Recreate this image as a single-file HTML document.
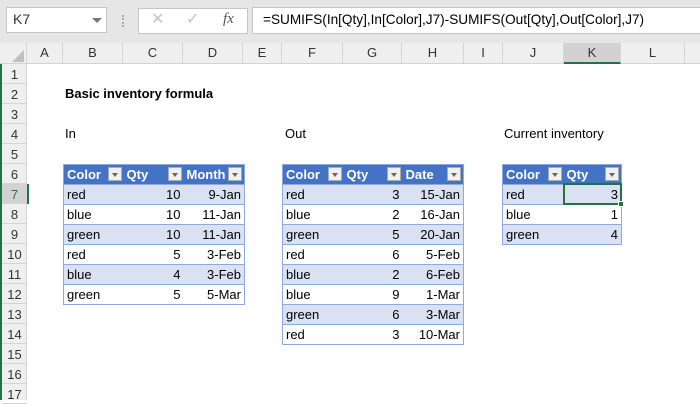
<!DOCTYPE html>
<html><head><style>
*{margin:0;padding:0;box-sizing:border-box}
body{width:700px;height:400px;overflow:hidden;background:#fff;font-family:"Liberation Sans",Arial,sans-serif;position:relative}
.a{position:absolute}
.top{left:0;top:0;width:700px;height:43px;background:#e6e6e6}
.box{background:#fff;border:1px solid #c6c6c6}
.colh{left:0;top:43px;width:700px;height:21px;background:#efefef;border-bottom:1px solid #d4d4d4}
.ch{position:absolute;top:43px;height:20px;font-size:13px;color:#333;text-align:center;line-height:20px;border-right:1px solid #d4d4d4}
.rowh{left:2px;top:64px;width:25px;height:336px;background:#efefef;border-right:1px solid #d4d4d4}
.rh{position:absolute;left:2px;width:25px;height:20px;font-size:13px;color:#333;text-align:center;line-height:21px;border-bottom:1px solid #d4d4d4}
.t{position:absolute;font-size:13px;color:#000;white-space:nowrap;line-height:20px}
table{position:absolute;border-collapse:collapse;font-size:13px;table-layout:fixed}
td{height:20px;padding:0 3px;line-height:19px;border-top:1px solid #8ea9db;white-space:nowrap;overflow:hidden}
tr.h td{background:#4472c4;color:#fff;font-weight:bold;position:relative;border-top:1px solid #8ea9db}
tr.b td{background:#d9e1f2}
td.r{text-align:right}
.dd{position:absolute;right:2px;top:2px;width:14px;height:14px;background:#f0f0f0;border:1px solid #aaa}
.dd:after{content:"";position:absolute;left:3px;top:5px;border-left:3.5px solid transparent;border-right:3.5px solid transparent;border-top:4px solid #666}
</style></head><body>
<div class="a" style="left:0;top:0;width:2px;height:400px;background:#217346"></div>
<div class="a top"></div>
<div class="a box" style="left:6px;top:7px;width:101px;height:26px"></div>
<div class="t" style="left:13px;top:9px;font-size:14px;color:#333">K7</div>
<div class="a" style="left:92px;top:18px;border-left:5px solid transparent;border-right:5px solid transparent;border-top:5px solid #777"></div>
<div class="a" style="left:122px;top:15px;width:2px;height:12px;border-left:2px dotted #aaa"></div>
<div class="a box" style="left:138px;top:8px;width:110px;height:26px"></div>
<div class="t" style="left:151px;top:10px;font-size:16px;color:#c4c4c4">✕</div>
<div class="t" style="left:186px;top:10px;font-size:16px;color:#c4c4c4">✓</div>
<div class="t" style="left:223px;top:9px;font-size:15px;color:#555;font-family:'Liberation Serif',serif;font-style:italic">fx</div>
<div class="a box" style="left:252px;top:7px;width:450px;height:27px"></div>
<div class="t" style="left:263px;top:10px;font-size:13.6px;color:#000">=SUMIFS(In[Qty],In[Color],J7)-SUMIFS(Out[Qty],Out[Color],J7)</div>

<div class="a colh"></div>
<div class="a" style="left:12px;top:50px;width:0;height:0;border-left:12px solid transparent;border-bottom:12px solid #c0c0c0"></div>
<div class="ch" style="left:0;width:27px"></div>
<div class="ch" style="left:27px;width:36px">A</div>
<div class="ch" style="left:63px;width:60px">B</div>
<div class="ch" style="left:123px;width:60px">C</div>
<div class="ch" style="left:183px;width:60px">D</div>
<div class="ch" style="left:243px;width:39px">E</div>
<div class="ch" style="left:282px;width:61px">F</div>
<div class="ch" style="left:343px;width:59px">G</div>
<div class="ch" style="left:402px;width:62px">H</div>
<div class="ch" style="left:464px;width:39px">I</div>
<div class="ch" style="left:503px;width:61px">J</div>
<div class="ch" style="left:564px;width:57px;background:#d2d2d2;border-bottom:2px solid #217346;height:21px">K</div>
<div class="ch" style="left:621px;width:64px">L</div>

<div class="a rowh"></div>
<div class="rh" style="top:64px">1</div><div class="rh" style="top:84px">2</div><div class="rh" style="top:104px">3</div><div class="rh" style="top:124px">4</div><div class="rh" style="top:144px">5</div><div class="rh" style="top:164px">6</div><div class="rh" style="top:184px;background:#d2d2d2;color:#217346">7</div><div class="rh" style="top:204px">8</div><div class="rh" style="top:224px">9</div><div class="rh" style="top:244px">10</div><div class="rh" style="top:264px">11</div><div class="rh" style="top:284px">12</div><div class="rh" style="top:304px">13</div><div class="rh" style="top:324px">14</div><div class="rh" style="top:344px">15</div><div class="rh" style="top:364px">16</div><div class="rh" style="top:384px">17</div>
<div class="a" style="left:27px;top:184px;width:2px;height:20px;background:#217346"></div>

<div class="t" style="left:65px;top:84px;font-weight:bold">Basic inventory formula</div>
<div class="t" style="left:65px;top:124px">In</div>
<div class="t" style="left:285px;top:124px">Out</div>
<div class="t" style="left:504px;top:124px">Current inventory</div>

<table style="left:63px;top:164px;width:181px;border-left:1px solid #8ea9db;border-right:1px solid #8ea9db;border-bottom:1px solid #8ea9db">
<colgroup><col style="width:60px"><col style="width:60px"><col style="width:61px"></colgroup>
<tr class="h"><td>Color<span class="dd"></span></td><td>Qty<span class="dd"></span></td><td>Month<span class="dd"></span></td></tr>
<tr class="b"><td>red</td><td class="r">10</td><td class="r">9-Jan</td></tr>
<tr><td>blue</td><td class="r">10</td><td class="r">11-Jan</td></tr>
<tr class="b"><td>green</td><td class="r">10</td><td class="r">11-Jan</td></tr>
<tr><td>red</td><td class="r">5</td><td class="r">3-Feb</td></tr>
<tr class="b"><td>blue</td><td class="r">4</td><td class="r">3-Feb</td></tr>
<tr><td>green</td><td class="r">5</td><td class="r">5-Mar</td></tr>
</table>

<table style="left:282px;top:164px;width:181px;border-left:1px solid #8ea9db;border-right:1px solid #8ea9db;border-bottom:1px solid #8ea9db">
<colgroup><col style="width:61px"><col style="width:59px"><col style="width:61px"></colgroup>
<tr class="h"><td>Color<span class="dd"></span></td><td>Qty<span class="dd"></span></td><td>Date<span class="dd"></span></td></tr>
<tr class="b"><td>red</td><td class="r">3</td><td class="r">15-Jan</td></tr>
<tr><td>blue</td><td class="r">2</td><td class="r">16-Jan</td></tr>
<tr class="b"><td>green</td><td class="r">5</td><td class="r">20-Jan</td></tr>
<tr><td>red</td><td class="r">6</td><td class="r">5-Feb</td></tr>
<tr class="b"><td>blue</td><td class="r">2</td><td class="r">6-Feb</td></tr>
<tr><td>blue</td><td class="r">9</td><td class="r">1-Mar</td></tr>
<tr class="b"><td>green</td><td class="r">6</td><td class="r">3-Mar</td></tr>
<tr><td>red</td><td class="r">3</td><td class="r">10-Mar</td></tr>
</table>

<table style="left:502px;top:164px;width:119px;border-left:1px solid #8ea9db;border-right:1px solid #8ea9db;border-bottom:1px solid #8ea9db">
<colgroup><col style="width:61px"><col style="width:58px"></colgroup>
<tr class="h"><td>Color<span class="dd"></span></td><td>Qty<span class="dd"></span></td></tr>
<tr class="b"><td>red</td><td class="r">3</td></tr>
<tr><td>blue</td><td class="r">1</td></tr>
<tr class="b"><td>green</td><td class="r">4</td></tr>
</table>
<div class="a" style="left:563px;top:183px;width:59px;height:22px;border:2px solid #217346"></div>
<div class="a" style="left:618px;top:201px;width:6px;height:6px;background:#217346;border:1px solid #fff"></div>
</body></html>
